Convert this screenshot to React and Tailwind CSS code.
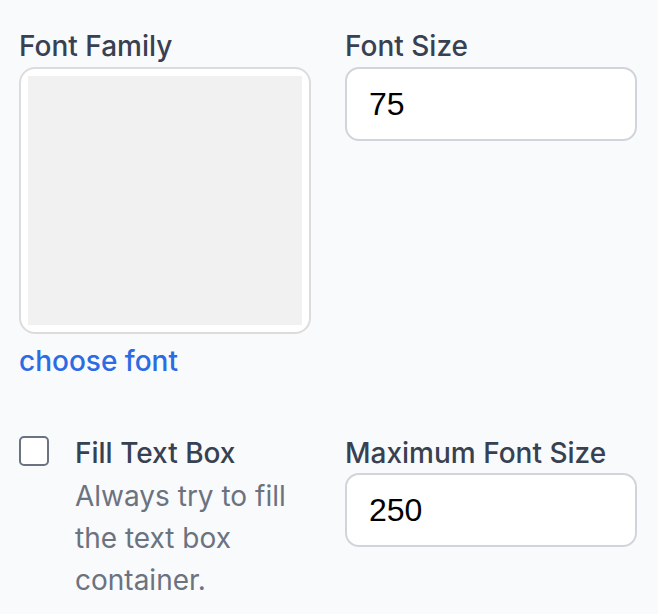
import React from "react";

export default function App() {
  return (
    <div
      className="min-h-screen w-full bg-[#f9fafb] pl-[19px] pr-[21px] pt-[26px]"
      style={{ fontFamily: "Inter, 'Noto Sans', sans-serif" }}
    >
      <div className="grid grid-cols-2 gap-x-[34px]">
        {/* Font Family */}
        <div className="flex flex-col">
          <label className="text-[28px] leading-[40px] font-medium text-[#374151]">Font Family</label>
          <div className="mt-px h-[267px] rounded-[16px] border-2 border-[#dcdcdc] bg-white p-[7px]">
            <div className="h-full w-full bg-[#f1f1f1]" />
          </div>
          <a className="mt-[7px] text-[28px] leading-[40px] font-medium text-[#2d6be4] cursor-pointer">choose font</a>
        </div>

        {/* Font Size */}
        <div className="flex flex-col">
          <label className="text-[28px] leading-[40px] font-medium text-[#374151]">Font Size</label>
          <div className="mt-px flex h-[74px] items-center rounded-[14px] border-2 border-[#d1d5db] bg-white pl-[22px]">
            <span className="text-[32px] text-black" style={{ fontFamily: "'Liberation Sans', Arial, sans-serif" }}>75</span>
          </div>
        </div>

        {/* Fill Text Box */}
        <div className="mt-[52px] flex">
          <div className="mt-[3px] h-[30px] w-[30px] shrink-0 rounded-[5px] border-2 border-[#6b7280] bg-white" />
          <div className="ml-[26px] flex flex-col">
            <span className="text-[28px] leading-[40px] font-medium text-[#374151]">Fill Text Box</span>
            <span className="mt-[2px] w-[230px] text-[28px] leading-[42px] text-[#6b7280]">
              Always try to fill the text box container.
            </span>
          </div>
        </div>

        {/* Maximum Font Size */}
        <div className="mt-[52px] flex flex-col">
          <label className="text-[28px] leading-[40px] font-medium text-[#374151]">Maximum Font Size</label>
          <div className="flex h-[74px] items-center rounded-[14px] border-2 border-[#d1d5db] bg-white pl-[22px]">
            <span className="text-[32px] text-black" style={{ fontFamily: "'Liberation Sans', Arial, sans-serif" }}>250</span>
          </div>
        </div>
      </div>
    </div>
  );
}
